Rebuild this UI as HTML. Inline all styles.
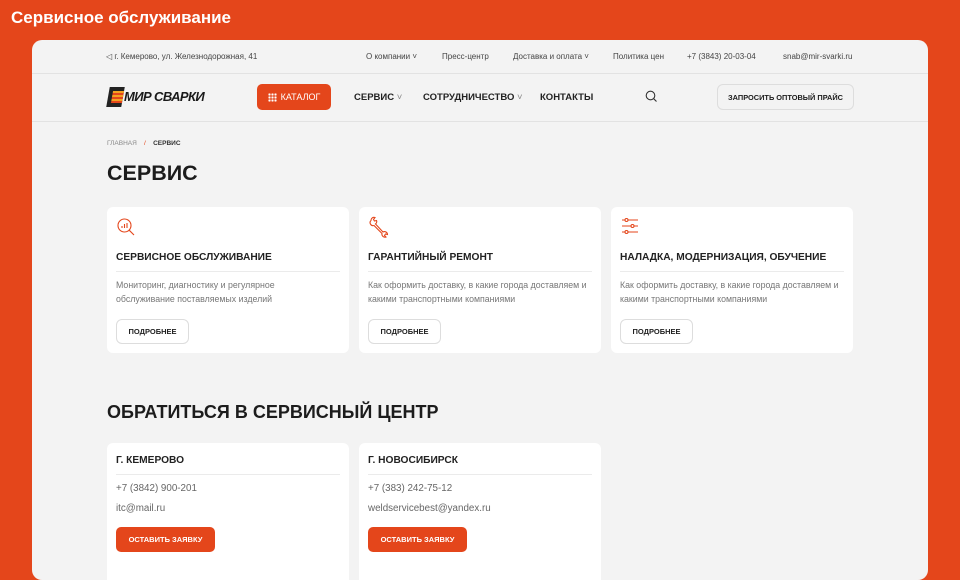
<!DOCTYPE html>
<html><head><meta charset="utf-8"><style>
*{margin:0;padding:0;box-sizing:border-box}
body{width:960px;height:560px;overflow:hidden;background:#e4461b;font-family:"Liberation Sans",Arial,sans-serif;position:relative;color:#1c1c1c}
.ttl{position:absolute;left:11px;top:8px;color:#fff;font-weight:bold;font-size:17px}
.panel{position:absolute;left:32px;top:40px;width:896px;height:540px;background:#f3f3f3;border-radius:10px;overflow:hidden}
.a{position:absolute;white-space:nowrap}
.top{font-size:8px;color:#444}
.hr{position:absolute;left:0;width:896px;height:1px;background:#e2e2e2}
.nav{font-size:9.5px;font-weight:bold;color:#222}
.card{position:absolute;background:#fff;border-radius:6px}
.card h3{position:absolute;left:9px;font-size:10.2px;font-weight:bold;color:#222;white-space:nowrap}
.card .ln{position:absolute;left:9px;right:9px;height:1px;background:#ebebeb}
.card p{position:absolute;left:9px;font-size:8.8px;color:#777;line-height:14px;white-space:nowrap}
.btn{position:absolute;left:9px;border:1px solid #ddd;border-radius:6px;font-size:7.5px;font-weight:bold;display:flex;align-items:center;justify-content:center;color:#222}
.ob{position:absolute;left:9px;background:#e4461b;color:#fff;border-radius:5px;font-size:7.5px;font-weight:bold;display:flex;align-items:center;justify-content:center;width:99px;height:25px}
</style></head><body>
<div class="ttl">Сервисное обслуживание</div>
<div class="panel">
<div class="a top" style="left:74px;top:12px">◁ г. Кемерово, ул. Железнодорожная, 41</div>
<div class="a top" style="left:334px;top:12px">О компании ˅</div>
<div class="a top" style="left:410px;top:12px">Пресс-центр</div>
<div class="a top" style="left:481px;top:12px">Доставка и оплата ˅</div>
<div class="a top" style="left:581px;top:12px">Политика цен</div>
<div class="a top" style="left:655px;top:12px">+7 (3843) 20-03-04</div>
<div class="a top" style="left:751px;top:12px">snab@mir-svarki.ru</div>
<div class="hr" style="top:33px"></div>
<div class="a" style="left:76px;top:47px;width:15px;height:20px;background:#222;transform:skewX(-10deg)"><div style="position:absolute;left:4px;top:4px;width:11px;height:12px;background:repeating-linear-gradient(#f5a020 0 2px,#e4461b 2px 4px)"></div></div>
<div class="a" style="left:92px;top:49px;font-size:13px;font-weight:bold;font-style:italic;color:#1a1a1a;letter-spacing:-0.6px">МИР СВАРКИ</div>
<div class="a" style="left:225px;top:44px;width:74px;height:26px;background:#e4461b;border-radius:5px;color:#fff;font-size:9px;display:flex;align-items:center;justify-content:center;gap:4px"><span style="display:inline-block;width:9px;height:9px;background:radial-gradient(circle,#fff 1px,transparent 1.3px) 0 0/3px 3px"></span>КАТАЛОГ</div>
<div class="a nav" style="left:322px;top:52px">СЕРВИС <span style="font-weight:normal;color:#888">˅</span></div>
<div class="a nav" style="left:391px;top:52px">СОТРУДНИЧЕСТВО <span style="font-weight:normal;color:#888">˅</span></div>
<div class="a nav" style="left:508px;top:52px">КОНТАКТЫ</div>
<svg class="a" style="left:613px;top:50px" width="13" height="13" viewBox="0 0 13 13"><circle cx="5.5" cy="5.5" r="4.3" fill="none" stroke="#333" stroke-width="1.1"/><path d="M8.8 8.8L11.5 11.5" stroke="#333" stroke-width="1.1"/></svg>
<div class="a" style="left:685px;top:44px;width:137px;height:26px;border:1px solid #ddd;border-radius:6px;font-size:7.4px;font-weight:bold;display:flex;align-items:center;justify-content:center">ЗАПРОСИТЬ ОПТОВЫЙ ПРАЙС</div>
<div class="hr" style="top:81px"></div>
<div class="a" style="left:75px;top:100px;font-size:6.5px;color:#888">ГЛАВНАЯ &nbsp;&nbsp; <span style="color:#e4461b">/</span> &nbsp;&nbsp; <b style="color:#333">СЕРВИС</b></div>
<div class="a" style="left:75px;top:121px;font-size:21.5px;font-weight:bold">СЕРВИС</div>

<div class="card" style="left:75px;top:167px;width:242px;height:146px">
<svg style="position:absolute;left:9px;top:10px" width="20" height="20" viewBox="0 0 20 20" fill="none" stroke="#e4461b" stroke-width="1.1"><circle cx="8.5" cy="8.5" r="6.5"/><path d="M13.3 13.3L18 18M6 11V9M8.5 11V7M11 11V6"/></svg>
<h3 style="top:45px">СЕРВИСНОЕ ОБСЛУЖИВАНИЕ</h3><div class="ln" style="top:64px"></div>
<p style="top:71px">Мониторинг, диагностику и регулярное<br>обслуживание поставляемых изделий</p>
<div class="btn" style="top:112px;width:73px;height:25px">ПОДРОБНЕЕ</div></div>

<div class="card" style="left:327px;top:167px;width:242px;height:146px">
<svg style="position:absolute;left:9px;top:9px" width="22" height="22" viewBox="0 0 22 22" fill="none" stroke="#e4461b" stroke-width="1.1"><path d="M3 4.5A3 3 0 0 1 7 1.5L5.5 3.5L6.5 5L8.5 4.5A3 3 0 0 1 7.5 8L15 16A3 3 0 0 1 19.5 18.5L17.5 18L16.5 19.5L18 21A3 3 0 0 1 14 17.5L6 9.5A3 3 0 0 1 3 4.5Z"/></svg>
<h3 style="top:45px">ГАРАНТИЙНЫЙ РЕМОНТ</h3><div class="ln" style="top:64px"></div>
<p style="top:71px">Как оформить доставку, в какие города доставляем и<br>какими транспортными компаниями</p>
<div class="btn" style="top:112px;width:73px;height:25px">ПОДРОБНЕЕ</div></div>

<div class="card" style="left:579px;top:167px;width:242px;height:146px">
<svg style="position:absolute;left:9px;top:10px" width="20" height="20" viewBox="0 0 20 20" fill="none" stroke="#e4461b" stroke-width="1.1"><path d="M2 3h3M8 3h10M2 9h9M14 9h4M2 15h3M8 15h10"/><circle cx="6.5" cy="3" r="1.5"/><circle cx="12.5" cy="9" r="1.5"/><circle cx="6.5" cy="15" r="1.5"/></svg>
<h3 style="top:45px">НАЛАДКА, МОДЕРНИЗАЦИЯ, ОБУЧЕНИЕ</h3><div class="ln" style="top:64px"></div>
<p style="top:71px">Как оформить доставку, в какие города доставляем и<br>какими транспортными компаниями</p>
<div class="btn" style="top:112px;width:73px;height:25px">ПОДРОБНЕЕ</div></div>

<div class="a" style="left:75px;top:362px;font-size:18px;font-weight:bold">ОБРАТИТЬСЯ В СЕРВИСНЫЙ ЦЕНТР</div>

<div class="card" style="left:75px;top:403px;width:242px;height:160px">
<h3 style="top:12px;font-size:10.2px">Г. КЕМЕРОВО</h3><div class="ln" style="top:31px"></div>
<p style="top:39px;font-size:9.8px;color:#666">+7 (3842) 900-201</p>
<p style="top:59px;font-size:9.8px;color:#666">itc@mail.ru</p>
<div class="ob" style="top:84px">ОСТАВИТЬ ЗАЯВКУ</div></div>

<div class="card" style="left:327px;top:403px;width:242px;height:160px">
<h3 style="top:12px;font-size:10.2px">Г. НОВОСИБИРСК</h3><div class="ln" style="top:31px"></div>
<p style="top:39px;font-size:9.8px;color:#666">+7 (383) 242-75-12</p>
<p style="top:59px;font-size:9.8px;color:#666">weldservicebest@yandex.ru</p>
<div class="ob" style="top:84px">ОСТАВИТЬ ЗАЯВКУ</div></div>
</div>
</body></html>
